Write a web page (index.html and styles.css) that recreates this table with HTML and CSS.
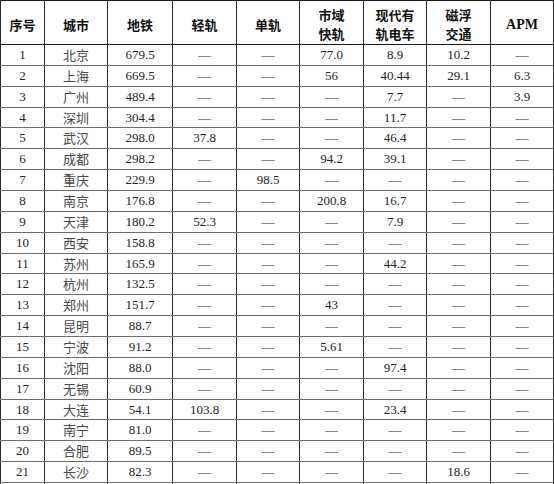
FILE: index.html
```html
<!DOCTYPE html>
<html lang="zh-CN">
<head>
<meta charset="utf-8">
<title>城市轨道交通里程</title>
<link rel="stylesheet" href="styles.css">
</head>
<body>
<table class="rail">
<colgroup>
<col class="c-no"><col class="c-city"><col class="c-w65"><col class="c-w64"><col class="c-w63"><col class="c-w64"><col class="c-w63"><col class="c-w64"><col class="c-w63">
</colgroup>
<thead>
<tr><th>序号</th><th>城市</th><th>地铁</th><th>轻轨</th><th>单轨</th><th>市域<br>快轨</th><th>现代有<br>轨电车</th><th>磁浮<br>交通</th><th class="latin">APM</th></tr>
</thead>
<tbody>
<tr><td>1</td><td class="city">北京</td><td>679.5</td><td>—</td><td>—</td><td>77.0</td><td>8.9</td><td>10.2</td><td>—</td></tr>
<tr><td>2</td><td class="city">上海</td><td>669.5</td><td>—</td><td>—</td><td>56</td><td>40.44</td><td>29.1</td><td>6.3</td></tr>
<tr><td>3</td><td class="city">广州</td><td>489.4</td><td>—</td><td>—</td><td>—</td><td>7.7</td><td>—</td><td>3.9</td></tr>
<tr><td>4</td><td class="city">深圳</td><td>304.4</td><td>—</td><td>—</td><td>—</td><td>11.7</td><td>—</td><td>—</td></tr>
<tr><td>5</td><td class="city">武汉</td><td>298.0</td><td>37.8</td><td>—</td><td>—</td><td>46.4</td><td>—</td><td>—</td></tr>
<tr><td>6</td><td class="city">成都</td><td>298.2</td><td>—</td><td>—</td><td>94.2</td><td>39.1</td><td>—</td><td>—</td></tr>
<tr><td>7</td><td class="city">重庆</td><td>229.9</td><td>—</td><td>98.5</td><td>—</td><td>—</td><td>—</td><td>—</td></tr>
<tr><td>8</td><td class="city">南京</td><td>176.8</td><td>—</td><td>—</td><td>200.8</td><td>16.7</td><td>—</td><td>—</td></tr>
<tr><td>9</td><td class="city">天津</td><td>180.2</td><td>52.3</td><td>—</td><td>—</td><td>7.9</td><td>—</td><td>—</td></tr>
<tr><td>10</td><td class="city">西安</td><td>158.8</td><td>—</td><td>—</td><td>—</td><td>—</td><td>—</td><td>—</td></tr>
<tr><td>11</td><td class="city">苏州</td><td>165.9</td><td>—</td><td>—</td><td>—</td><td>44.2</td><td>—</td><td>—</td></tr>
<tr><td>12</td><td class="city">杭州</td><td>132.5</td><td>—</td><td>—</td><td>—</td><td>—</td><td>—</td><td>—</td></tr>
<tr><td>13</td><td class="city">郑州</td><td>151.7</td><td>—</td><td>—</td><td>43</td><td>—</td><td>—</td><td>—</td></tr>
<tr><td>14</td><td class="city">昆明</td><td>88.7</td><td>—</td><td>—</td><td>—</td><td>—</td><td>—</td><td>—</td></tr>
<tr><td>15</td><td class="city">宁波</td><td>91.2</td><td>—</td><td>—</td><td>5.61</td><td>—</td><td>—</td><td>—</td></tr>
<tr><td>16</td><td class="city">沈阳</td><td>88.0</td><td>—</td><td>—</td><td>—</td><td>97.4</td><td>—</td><td>—</td></tr>
<tr><td>17</td><td class="city">无锡</td><td>60.9</td><td>—</td><td>—</td><td>—</td><td>—</td><td>—</td><td>—</td></tr>
<tr><td>18</td><td class="city">大连</td><td>54.1</td><td>103.8</td><td>—</td><td>—</td><td>23.4</td><td>—</td><td>—</td></tr>
<tr><td>19</td><td class="city">南宁</td><td>81.0</td><td>—</td><td>—</td><td>—</td><td>—</td><td>—</td><td>—</td></tr>
<tr><td>20</td><td class="city">合肥</td><td>89.5</td><td>—</td><td>—</td><td>—</td><td>—</td><td>—</td><td>—</td></tr>
<tr><td>21</td><td class="city">长沙</td><td>82.3</td><td>—</td><td>—</td><td>—</td><td>—</td><td>18.6</td><td>—</td></tr>
<tr class="cut"><td></td><td></td><td></td><td></td><td></td><td></td><td></td><td></td><td></td></tr>
</tbody>
</table>
</body>
</html>
```

FILE: styles.css
```css
html, body {
  margin: 0;
  padding: 0;
  background: #ffffff;
}

body {
  font-family: "Liberation Serif", "Noto Sans CJK SC", serif;
  color: #222222;
  overflow: hidden;
}

.rail {
  border-collapse: collapse;
  table-layout: fixed;
  width: 554px;
  font-size: 13px;
}

.c-no { width: 44px; }
.c-city { width: 63px; }
.c-w65 { width: 65px; }
.c-w64 { width: 64px; }
.c-w63 { width: 63px; }

.rail th,
.rail td {
  padding: 0;
  text-align: center;
  vertical-align: middle;
  border-left: 1px solid #2a2a2a;
  border-right: 1px solid #2a2a2a;
  border-top: 1px solid #6e6e6e;
  border-bottom: 1px solid #6e6e6e;
  white-space: nowrap;
}

.rail thead th {
  height: 40px;
  font-family: "Noto Sans CJK SC", "Liberation Sans", sans-serif;
  font-weight: 700;
  font-size: 13px;
  line-height: 19px;
  color: #111111;
  border-top: 1px solid #1a1a1a;
  border-bottom: 1px solid #1a1a1a;
  padding-top: 3px;
}

.rail thead th.latin {
  font-family: "Liberation Serif", serif;
  font-size: 14px;
}

.rail tbody tr {
  height: 20.86px;
}

.rail tbody td {
  line-height: 16px;
  color: #262626;
}

.rail td.city {
  font-family: "Noto Sans CJK SC", sans-serif;
  font-weight: 400;
  color: #4a4a4a;
}

.rail tr.cut td {
  height: 20px;
  border-bottom: none;
}
```
